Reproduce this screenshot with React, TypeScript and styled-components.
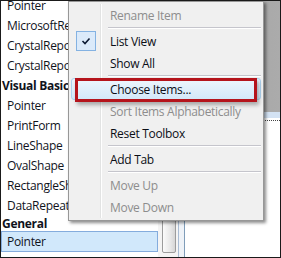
import React from "react"
import styled, { createGlobalStyle } from "styled-components"

const GlobalStyle = createGlobalStyle`
  body {
    margin: 0;
    font-family: "Open Sans", "Noto Sans", sans-serif;
    font-size: 12px;
    letter-spacing: -0.3px;
    color: #000;
  }
`

const Frame = styled.div`
  position: relative;
  width: 281px;
  height: 258px;
  box-sizing: border-box;
  border: 1px solid #1a1a1a;
  overflow: hidden;
  display: flex;
  background: #fff;
`

const ToolboxPane = styled.div`
  display: flex;
  width: 184px;
  flex-shrink: 0;
`

const ItemList = styled.div`
  width: 157px;
  display: flex;
  flex-direction: column;
  margin-top: -6px;
`

const Row = styled.div<{ $selected?: boolean }>`
  height: 20px;
  display: flex;
  align-items: center;
  padding-left: 6px;
  white-space: nowrap;
  overflow: hidden;
  box-sizing: border-box;
  color: #10131c;
  ${({ $selected }) =>
    $selected &&
    `
    height: 21px;
    border: 1px solid #84acdd;
    background: #d1e8fb;
    padding-left: 5px;
  `}
`

const GroupHeader = styled.div<{ $short?: boolean }>`
  height: ${({ $short }) => ($short ? "16px" : "20px")};
  display: flex;
  align-items: center;
  padding-left: 1px;
  font-weight: 700;
  white-space: nowrap;
  overflow: hidden;
  color: #10131c;
`

const Scrollbar = styled.div`
  width: 20px;
  background: #f4f4f4;
  display: flex;
  flex-direction: column;
  justify-content: flex-end;
  padding: 0 2px 4px 4px;
  box-sizing: border-box;
`

const Thumb = styled.div`
  height: 110px;
  border: 1px solid #9c9c9c;
  border-radius: 2px;
  background: linear-gradient(to right, #fbfbfb, #e8e8e8 60%, #d6d6d6);
`

const PaneEdge = styled.div`
  width: 7px;
  box-sizing: border-box;
  border-left: 1px solid #a9bcd3;
  border-right: 1px solid #7f9db9;
  background: #eef2f7;
`

const DesignerPane = styled.div`
  flex: 1;
  display: flex;
  flex-direction: column;
`

const GreyArea = styled.div`
  height: 111px;
  background: linear-gradient(to right, #8c8c8c, #a4a4a4 30%, #ababab);
`

const TabBand = styled.div`
  height: 6px;
  background: #d3e2f3;
  border-bottom: 2px solid #fff;
`

const DottedRule = styled.div`
  border-top: 1px dotted #444;
`

const Menu = styled.div`
  position: absolute;
  left: 67px;
  top: 0;
  width: 196px;
  box-sizing: border-box;
  border: 1px solid #979797;
  background: #f0f0f0;
  padding: 2px;
  box-shadow: 2px 2px 3px rgba(0, 0, 0, 0.45);

  &::before {
    content: "";
    position: absolute;
    left: 31px;
    top: 2px;
    bottom: 2px;
    width: 1px;
    background: #e2e3e3;
    border-right: 1px solid #fff;
  }
`

const MenuItem = styled.div<{ $disabled?: boolean; $hover?: boolean }>`
  position: relative;
  height: 22px;
  display: flex;
  align-items: center;
  padding-left: 5px;
  box-sizing: border-box;
  color: ${({ $disabled }) => ($disabled ? "#8d8d8d" : "#0b0e16")};
  white-space: nowrap;
  ${({ $hover }) =>
    $hover &&
    `
    border: 1px solid #aed3f0;
    border-radius: 3px;
    padding-left: 4px;
    background: linear-gradient(#eef6fd, #d3e8f9);
  `}
`

const IconSlot = styled.span`
  width: 20px;
  height: 20px;
  display: flex;
  align-items: center;
  justify-content: center;
  flex-shrink: 0;
`

const CheckBox = styled(IconSlot)`
  box-sizing: border-box;
  border: 1px solid #84b2e2;
  background: #dbeafa;
`

const Label = styled.span`
  margin-left: 14px;
  position: relative;
  z-index: 1;
`

const Separator = styled.div`
  height: 4px;
  display: flex;
  align-items: center;
  margin-left: 37px;

  &::after {
    content: "";
    flex: 1;
    height: 1px;
    background: #c5c5cc;
    border-bottom: 1px solid #fff;
  }
`

const Callout = styled.div`
  position: absolute;
  left: 74px;
  top: 77px;
  width: 182px;
  height: 24px;
  box-sizing: border-box;
  border: 3px solid #b5141c;
  box-shadow: 2px 3px 4px rgba(0, 0, 0, 0.3);
`

const listRows: { text: string; kind: "row" | "header" | "short" | "selected" }[] = [
  { text: "Pointer", kind: "row" },
  { text: "MicrosoftReportViewer", kind: "row" },
  { text: "CrystalReportViewer", kind: "row" },
  { text: "CrystalReportDocument", kind: "row" },
  { text: "Visual Basic PowerPacks", kind: "header" },
  { text: "Pointer", kind: "row" },
  { text: "PrintForm", kind: "row" },
  { text: "LineShape", kind: "row" },
  { text: "OvalShape", kind: "row" },
  { text: "RectangleShape", kind: "row" },
  { text: "DataRepeater", kind: "row" },
  { text: "General", kind: "short" },
  { text: "Pointer", kind: "selected" },
]

type Entry =
  | { sep: true }
  | { sep?: false; label: string; disabled?: boolean; checked?: boolean; hover?: boolean }

const menuEntries: Entry[] = [
  { label: "Rename Item", disabled: true },
  { sep: true },
  { label: "List View", checked: true },
  { label: "Show All" },
  { sep: true },
  { label: "Choose Items...", hover: true },
  { label: "Sort Items Alphabetically", disabled: true },
  { label: "Reset Toolbox" },
  { sep: true },
  { label: "Add Tab" },
  { sep: true },
  { label: "Move Up", disabled: true },
  { label: "Move Down", disabled: true },
]

const CheckMark = () => (
  <svg width="10" height="8" viewBox="0 0 10 8">
    <path d="M1.5 4 L4 6.5 L8.5 1.5" fill="none" stroke="#0d1a33" strokeWidth="1.6" />
  </svg>
)

export default function App() {
  return (
    <>
      <GlobalStyle />
      <Frame>
        <ToolboxPane>
          <ItemList>
            {listRows.map((r, i) =>
              r.kind === "header" || r.kind === "short" ? (
                <GroupHeader key={i} $short={r.kind === "short"}>
                  {r.text}
                </GroupHeader>
              ) : (
                <Row key={i} $selected={r.kind === "selected"}>
                  {r.text}
                </Row>
              )
            )}
          </ItemList>
          <Scrollbar>
            <Thumb />
          </Scrollbar>
          <PaneEdge />
        </ToolboxPane>
        <DesignerPane>
          <GreyArea />
          <TabBand />
          <DottedRule />
        </DesignerPane>

        <Menu>
          {menuEntries.map((e, i) =>
            e.sep ? (
              <Separator key={i} />
            ) : (
              <MenuItem key={i} $disabled={e.disabled} $hover={e.hover}>
                {e.checked ? (
                  <CheckBox>
                    <CheckMark />
                  </CheckBox>
                ) : (
                  <IconSlot />
                )}
                <Label>{e.label}</Label>
              </MenuItem>
            )
          )}
        </Menu>
        <Callout />
      </Frame>
    </>
  )
}
